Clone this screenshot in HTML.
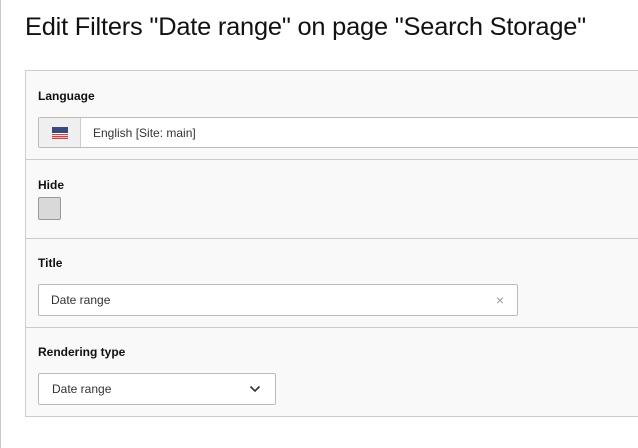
<html><head><style>
body{margin:0;width:638px;height:448px;background:#fff;font-family:"Liberation Sans",sans-serif;position:relative;overflow:hidden}
.vl{position:absolute;left:0;top:0;width:1px;height:448px;background:#c8c8c8}
h1{position:absolute;left:25px;top:13px;margin:0;font-weight:400;font-size:25.4px;color:#111;letter-spacing:-0.2px}
.panel{position:absolute;left:25px;top:70px;width:620px;height:345px;background:#f9f9f9;border:1px solid #ccc}
.sep{position:absolute;left:0;width:100%;height:1px;background:#ccc}
.lbl{position:absolute;left:12px;font-size:12px;font-weight:bold;color:#111}
.inp{position:absolute;background:#fff;border:1px solid #bbb;border-radius:2px;box-sizing:border-box;font-size:12px;color:#333}
</style></head><body>
<div class="vl"></div>
<h1>Edit Filters "Date range" on page "Search Storage"</h1>
<div class="panel">
<div class="lbl" style="top:18px">Language</div>
<div class="inp" style="left:12px;top:46px;width:620px;height:31px">
 <div style="position:absolute;left:0;top:0;width:41px;height:29px;background:#efefef;border-right:1px solid #ccc"></div>
 <svg style="position:absolute;left:13px;top:9px" width="16" height="12" viewBox="0 0 16 12"><rect width="16" height="12" fill="#fff"/><rect y="7" width="16" height="1.2" fill="#c44"/><rect y="9" width="16" height="1.2" fill="#c44"/><rect y="10.8" width="16" height="1.2" fill="#c44"/><rect width="16" height="6" fill="#3c4a7a"/></svg>
 <span style="position:absolute;left:54px;top:8px">English [Site: main]</span>
</div>
<div class="sep" style="top:88px"></div>
<div class="lbl" style="top:107px">Hide</div>
<div style="position:absolute;left:12px;top:126px;width:23px;height:23px;box-sizing:border-box;background:#d9d9d9;border:1px solid #999;border-radius:2px"></div>
<div class="sep" style="top:167px"></div>
<div class="lbl" style="top:185px">Title</div>
<div class="inp" style="left:12px;top:213px;width:480px;height:32px"><span style="position:absolute;left:12px;top:8px">Date range</span><span style="position:absolute;right:13px;top:7px;color:#999;font-size:14px">×</span></div>
<div class="sep" style="top:256px"></div>
<div class="lbl" style="top:274px">Rendering type</div>
<div class="inp" style="left:12px;top:302px;width:238px;height:32px"><span style="position:absolute;left:13px;top:8px">Date range</span>
<svg style="position:absolute;left:210px;top:11px" width="12" height="8" viewBox="0 0 12 8"><path d="M1.5 1.5L6 6L10.5 1.5" fill="none" stroke="#333" stroke-width="1.6"/></svg></div>
</div>
</body></html>
